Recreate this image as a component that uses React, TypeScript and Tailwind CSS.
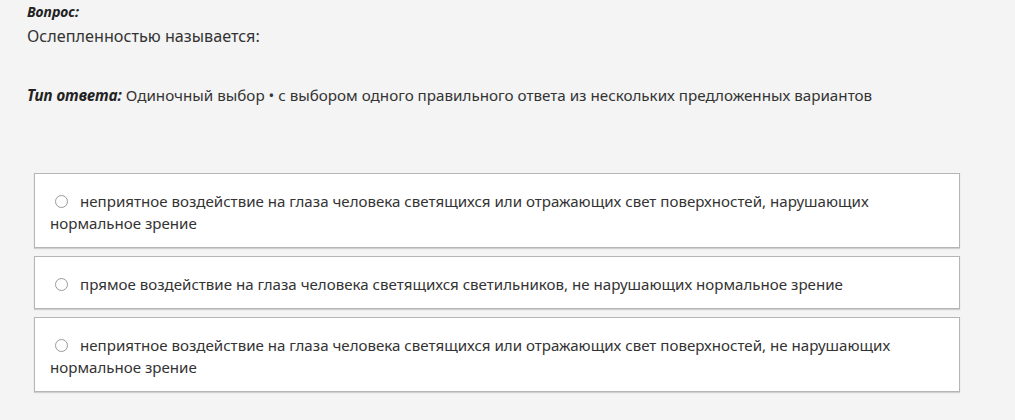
import React from "react";

const options = [
  "неприятное воздействие на глаза человека светящихся или отражающих свет поверхностей, нарушающих нормальное зрение",
  "прямое воздействие на глаза человека светящихся светильников, не нарушающих нормальное зрение",
  "неприятное воздействие на глаза человека светящихся или отражающих свет поверхностей, не нарушающих нормальное зрение",
];

export default function App() {
  return (
    <div
      className="w-[1015px] h-[420px] bg-[#f4f4f4] text-[#333] overflow-hidden"
      style={{ fontFamily: '"Noto Sans", "Open Sans", sans-serif' }}
    >
      <div className="pl-[27px] pt-[2px]">
        <div className="text-[14px] font-bold italic leading-[20px] text-[#222]">Вопрос:</div>
        <div className="text-[16.2px] leading-[26px] mt-[1px]">Ослепленностью называется:</div>
        <div className="mt-[36px] text-[15.2px] leading-[20px]">
          <span className="font-bold italic text-[#222]">Тип ответа:</span> Одиночный выбор • с выбором одного правильного ответа из нескольких предложенных вариантов
        </div>
      </div>
      <div className="ml-[34px] w-[926px] mt-[68px] flex flex-col gap-[8px]">
        {options.map((o, i) => (
          <div
            key={i}
            className="bg-white border border-[#b5b5b5] shadow-[0_1px_1px_rgba(0,0,0,0.15)] pl-[15px] pr-[60px] pt-[16px] pb-[13px] text-[15.1px] leading-[22px]"
          >
            <span className="inline-block w-[13px] h-[13px] rounded-full border border-[#9a9a9a] align-[-1px] ml-[5px] mr-[12px] bg-white"></span>
            {o}
          </div>
        ))}
      </div>
    </div>
  );
}
